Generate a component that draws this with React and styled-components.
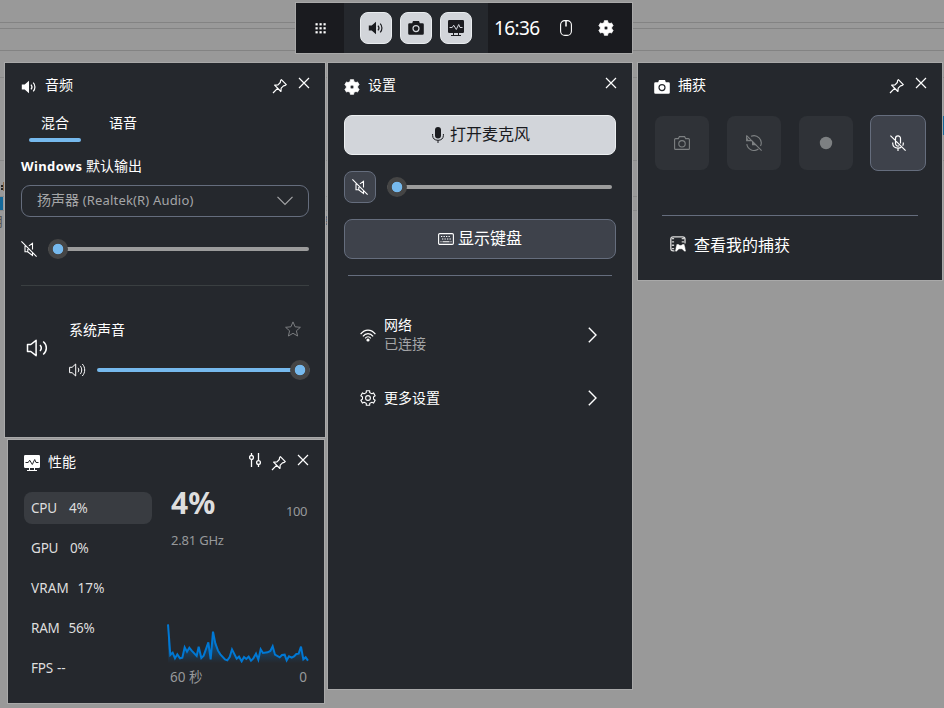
import React from 'react';
import styled, {createGlobalStyle} from 'styled-components';

const GlobalStyle = createGlobalStyle`
  * {
    box-sizing: border-box;
  }

  body {
    margin: 0;
    overflow: hidden;
    font-family: "Noto Sans", "Noto Sans CJK SC", sans-serif;
    font-size: 14px;
    color: #fff;
  }

  button {
    font: inherit;
    color: inherit;
    padding: 0;
    margin: 0;
    border: 0;
    background: none;
  }

  svg {
    display: block;
    flex: none;
  }
`;

const Desktop = styled.main`
  position: relative;
  width: 944px;
  height: 708px;
  overflow: hidden;
  background:
    linear-gradient(#838383, #838383) 0 22px / 100% 1px no-repeat,
    linear-gradient(#838383, #838383) 0 28px / 100% 1px no-repeat,
    linear-gradient(#838383, #838383) 0 50px / 100% 1px no-repeat,
    linear-gradient(#8a8a8a, #8a8a8a) 0 77px / 100% 1px no-repeat,
    linear-gradient(#8a8a8a, #8a8a8a) 0 160px / 100% 1px no-repeat,
    linear-gradient(#8a8a8a, #8a8a8a) 0 196px / 640px 1px no-repeat,
    linear-gradient(#8a8a8a, #8a8a8a) 0 210px / 640px 1px no-repeat,
    linear-gradient(#222, #222) 1px 185px / 2px 2px no-repeat,
    linear-gradient(#222, #222) 1px 188px / 2px 2px no-repeat,
    linear-gradient(#8a6a4a, #8a6a4a) 3px 182px / 1px 9px no-repeat,
    linear-gradient(#14699a, #14699a) 0 197px / 3px 13px no-repeat,
    linear-gradient(#14699a, #14699a) 942px 116px / 2px 19px no-repeat,
    #999;
`;

const DesktopText = styled.span`
  position: absolute;
  left: ${p => p.$x}px;
  top: ${p => p.$y}px;
  font-size: 13px;
  line-height: 18px;
  color: ${p => p.$color || '#555'};
`;

// a floating overlay window
const Panel = styled.section`
  position: absolute;
  left: ${p => p.$x}px;
  top: ${p => p.$y}px;
  width: ${p => p.$w}px;
  height: ${p => p.$h}px;
  background: #25282d;
  box-shadow: 0 0 0 1px #a9a9a9;
`;

const Header = styled.header`
  display: flex;
  height: 44px;
  padding: 15px 15px 0 16px;

  > svg {
    margin-top: 1px;
  }
`;

const Title = styled.h2`
  flex: 1;
  margin: 0 0 0 8px;
  font-size: 14px;
  font-weight: 400;
  line-height: 14px;
`;

const HeaderButton = styled.button`
  height: 16px;
  margin: ${p => p.$top || 0}px 0 0 ${p => p.$gap || 0}px;
`;

const Latin = styled.span`
  font-size: 13px;
  letter-spacing: ${p => p.$spacing || 0}px;
  font-weight: ${p => (p.$bold ? 700 : 400)};
`;

const Divider = styled.hr`
  height: 1px;
  margin: ${p => p.$margin};
  border: 0;
  background: ${p => p.$color || '#656d7d'};
`;

/* toolbar */

const Toolbar = styled(Panel)`
  display: flex;
  align-items: stretch;
  background: #1a1b1f;
`;

const GridButton = styled.button`
  display: flex;
  align-items: center;
  justify-content: center;
  flex: none;
  width: 48px;
`;

const WidgetButtons = styled.div`
  display: flex;
  align-items: center;
  justify-content: center;
  flex: none;
  gap: 8px;
  width: 144px;
  background: #25282d;
`;

const WidgetButton = styled.button`
  display: flex;
  align-items: center;
  justify-content: center;
  width: 32px;
  height: 32px;
  border: 1px solid #e9ecef;
  border-radius: 8px;
  background: #d2d5da;
  color: #1a1b1f;
`;

const Status = styled.div`
  display: flex;
  align-items: center;
  flex: 1;
  padding: 0 18px 0 6px;
`;

const Clock = styled.time`
  width: 66px;
  font-size: 19px;
  line-height: 24px;
  letter-spacing: -0.6px;
`;

const StatusButton = styled.button`
  margin-left: ${p => p.$gap || 0}px;
`;

/* audio */

const Tabs = styled.nav`
  display: flex;
  gap: 16px;
  padding: 9px 24px 0;
`;

const Tab = styled.button`
  width: 52px;
  height: 26px;
  line-height: 14px;

  &::after {
    content: "";
    display: block;
    height: 4px;
    margin-top: 8px;
    border-radius: 2px;
    background: ${p => (p.$active ? '#76b9ed' : 'transparent')};
  }
`;

const OutputLabel = styled.div`
  height: 16px;
  margin: 16px 16px 0;
  line-height: 16px;
`;

const Select = styled.button`
  display: flex;
  align-items: center;
  justify-content: space-between;
  width: 288px;
  height: 32px;
  margin: 11px 16px 0;
  padding: 0 15px;
  border: 1px solid #656d7d;
  border-radius: 9px;
  color: #a4a5a7;
  line-height: 16px;

  > span {
    padding-bottom: 2px;
  }
`;

const VolumeRow = styled.div`
  display: flex;
  align-items: center;
  height: 20px;
  margin: ${p => p.$margin};
  gap: 11px;
`;

const Track = styled.div`
  display: flex;
  align-items: center;
  flex: 1;
  height: 4px;
  border-radius: 2px;
  background: ${p => (p.$full ? '#76b9ed' : '#9c9c9c')};
  justify-content: ${p => (p.$full ? 'flex-end' : 'flex-start')};
`;

const Thumb = styled.span`
  width: 20px;
  height: 20px;
  flex: none;
  border-radius: 50%;
  background: radial-gradient(circle, #76b9ed 4.900px, #454545 5.600px);
`;

const AppRow = styled.div`
  display: flex;
  padding: 34px 15px 0 21px;
`;

const AppIcon = styled.div`
  width: 43px;
  padding-top: 19px;
`;

const AppBody = styled.div`
  flex: 1;
`;

const AppName = styled.div`
  display: flex;
  justify-content: space-between;
  align-items: center;
  height: 20px;
  padding-right: 9px;
  line-height: 18px;

  svg {
    margin-bottom: 2px;
  }
`;

/* settings */

const WideButton = styled.button`
  display: flex;
  align-items: center;
  justify-content: center;
  gap: 4px;
  width: 272px;
  height: 40px;
  font-size: 16px;
  line-height: 20px;
  border: 1px solid ${p => (p.$light ? '#eceff1' : '#656d7d')};
  border-radius: 8px;
  background: ${p => (p.$light ? '#d2d5da' : '#3e424b')};
  color: ${p => (p.$light ? '#1a1b1f' : '#fff')};

  span {
    padding-bottom: 2px;
  }
`;

const SettingsBody = styled.div`
  padding: 8px 16px 0;
`;

const MicRow = styled.div`
  display: flex;
  align-items: center;
  gap: 11px;
  margin: 16px 4px 16px 0;
`;

const MuteButton = styled.button`
  display: flex;
  align-items: center;
  justify-content: center;
  width: 32px;
  height: 32px;
  border: 1px solid #656d7d;
  border-radius: 8px;
  background: #3e424b;
`;

const LinkRow = styled.button`
  display: flex;
  align-items: center;
  width: 100%;
  height: ${p => p.$h}px;
  padding: 0 19px 0 16px;
  gap: 8px;
  text-align: left;
`;

const LinkText = styled.div`
  flex: 1;
  padding-bottom: 2px;
  line-height: 19px;

  small {
    display: block;
    font-size: 14px;
    color: #a4a5a7;
  }
`;

/* capture */

const CaptureButtons = styled.div`
  display: flex;
  align-items: center;
  gap: 18px;
  height: 56px;
  margin: 8px 0 0 17px;
`;

const CaptureButton = styled.button`
  display: flex;
  align-items: center;
  justify-content: center;
  flex: none;
  width: ${p => (p.$active ? 56 : 54)}px;
  height: ${p => (p.$active ? 56 : 54)}px;
  margin-left: ${p => (p.$active ? -1 : 0)}px;
  border: ${p => (p.$active ? '1px solid #656d7d' : '0')};
  border-radius: 8px;
  background: ${p => (p.$active ? '#3e424b' : '#2f3237')};
  color: ${p => (p.$active ? '#fff' : '#7d8082')};
`;

const CaptureLink = styled.button`
  display: flex;
  align-items: center;
  gap: 8px;
  margin: 17px 0 0 32px;
  height: 24px;
  font-size: 16px;
  line-height: 24px;

  svg {
    margin-bottom: 3px;
  }
`;

/* performance */

const PerfBody = styled.div`
  display: flex;
  padding: 8px 16px 0 16px;
`;

const Metrics = styled.div`
  display: flex;
  flex-direction: column;
  flex: none;
  gap: 8px;
  width: 128px;
  margin-right: 15px;
`;

const Metric = styled.div`
  display: flex;
  align-items: center;
  height: 32px;
  padding-left: 7px;
  border-radius: 8px;
  font-size: 13.5px;
  letter-spacing: ${p => p.$spacing || -0.2}px;
  color: #dedede;
  background: ${p => (p.$active ? '#393c41' : 'transparent')};
`;

const MetricName = styled.span`
  width: ${p => p.$w}px;
`;

const Detail = styled.div`
  flex: 1;
  color: #97999b;
  font-size: 13px;
`;

const DetailTop = styled.div`
  display: flex;
  justify-content: space-between;
  height: 34px;
  padding: 0 2px 0 4px;

  strong {
    font-size: 30px;
    line-height: 22px;
    color: #dedede;
  }

  span {
    margin-top: 9px;
    line-height: 20px;
    letter-spacing: -0.4px;
  }
`;

const Speed = styled.div`
  height: 20px;
  margin: 4px 0 73px 4px;
  line-height: 20px;
  letter-spacing: -0.2px;
`;

const Axis = styled.div`
  display: flex;
  justify-content: space-between;
  padding: 0 2px 0 3px;
  margin-top: 4px;
  font-size: 13.5px;
  line-height: 20px;
`;

/* icons */

const Icon = ({w = 16, h = 16, sw = 1, box, children}) => (
  <svg width={w} height={h} viewBox={box || `0 0 ${w} ${h}`} fill="none" stroke="currentColor" strokeWidth={sw}>
    {children}
  </svg>
);

const CloseIcon = () => (
  <Icon w={12} h={12} sw={1.2}><path d="M1 1l10 10M11 1L1 11" /></Icon>
);

const PinIcon = () => (
  <Icon sw={1.2}>
    <path d="M1 15l4.8-4.8M9.4 1.7l4.9 4.9-1 .8-1.8.4-2.3 2.3-.3 3.4L2.6 7.2 6 6.8l2.3-2.3.3-1.8z" strokeLinejoin="round" />
  </Icon>
);

const SpeakerFilled = () => (
  <Icon>
    <path d="M.8 5.4h2.9L8 1.7v12.6l-4.3-3.7H.8z" fill="currentColor" stroke="none" />
    <path d="M10 5.6c1.1 1.3 1.1 3.5 0 4.8M12.2 3.6c2.3 2.4 2.3 6.4 0 8.8" strokeWidth="1.2" />
  </Icon>
);

const SpeakerMuted = () => (
  <Icon sw={1.1}>
    <path d="M.4.4l15.2 15.2M5.3 5.2H4v5.6h2.6l4.9 3.7v-3M7.9 4.9l3.6-2.6v6.1M6.8 6v4.8" />
  </Icon>
);

const CameraFilled = () => (
  <Icon>
    <path d="M1.5 3.2h2.7L5 1h6l.8 2.2h2.7q1.3 0 1.3 1.3v9q0 1.3-1.3 1.3h-13Q.2 14.8.2 13.5v-9q0-1.3 1.3-1.3z" fill="currentColor" stroke="none" />
    <circle cx="8" cy="8.6" r="3" stroke="var(--hole)" strokeWidth="1.2" />
  </Icon>
);

const CameraOutline = () => (
  <Icon sw={1.1}>
    <path d="M1.6 3.6h2.8l1-2h5.2l1 2h2.8q1 0 1 1v8.8q0 1-1 1H1.6q-1 0-1-1V4.6q0-1 1-1z" />
    <circle cx="8" cy="8.8" r="3.2" />
  </Icon>
);

const MonitorFilled = () => (
  <Icon>
    <path d="M1.2 0h13.6Q16 0 16 1.2v10.6q0 1.2-1.2 1.2H1.2Q0 13 0 11.8V1.2Q0 0 1.2 0z" fill="currentColor" stroke="none" />
    <path d="M5.5 13v2.5M10.5 13v2.500M3 15.5h10" />
    <path d="M1.5 7.5h2.7l1.5-2.300 2.600 4.300 2.400-5 1.300 3h2.500" stroke="var(--hole)" />
  </Icon>
);

const Hole = styled.span`
  --hole: ${p => p.$color};
  display: block;
  height: 16px;
  margin-top: ${p => p.$top || 0}px;
`;

// six-toothed gear, first tooth pointing up
const gearPath = (outer, inner) => {
  const points = [];
  for (let i = 0; i < 6; i++) {
    [[-28, inner], [-17, inner + 0.3], [-13, outer], [13, outer], [17, inner + 0.3], [28, inner]].forEach(([deg, r]) => {
      const a = ((i * 60 + deg - 90) * Math.PI) / 180;
      points.push(`${(8 + r * Math.cos(a)).toFixed(2)} ${(8 + r * Math.sin(a)).toFixed(2)}`);
    });
  }
  return `M${points.join('L')}Z`;
};

const GearFilled = () => (
  <Icon>
    <path
      d={`${gearPath(7.5, 5.7)}M10 8a2 2 0 1 0-4 0a2 2 0 1 0 4 0z`}
      fill="currentColor"
      fillRule="evenodd"
      strokeLinejoin="round"
      strokeWidth=".8"
    />
  </Icon>
);

const GearOutline = () => (
  <Icon sw={1.1}>
    <path d={gearPath(7.5, 5.5)} strokeLinejoin="round" />
    <circle cx="8" cy="8" r="2.4" />
  </Icon>
);

const GridIcon = () => (
  <svg width="11" height="11" viewBox="0 0 11 11" fill="#fff">
    {[0, 4, 8].map(y => [0, 4, 8].map(x => <rect key={`${x}-${y}`} x={x + 0.5} y={y + 0.2} width="2.2" height="2.2" />))}
  </svg>
);

const MouseIcon = () => (
  <Icon w={12} h={16} sw={1.1}>
    <rect x=".6" y=".6" width="10.8" height="14.8" rx="4.2" />
    <path d="M6 1v5.500" strokeWidth="1.5" />
  </Icon>
);

const ChevronDown = () => (
  <Icon w={16} h={10} sw={1.2}><path d="M.5.8L8 8.5 15.5.8" /></Icon>
);

const ChevronRight = () => (
  <Icon w={9} h={16} sw={1.4}><path d="M.8.7L8 8 .8 15.3" /></Icon>
);

const StarIcon = () => (
  <Icon>
    <path d="M8 .9l2.1 4.9 5.3.5-4 3.5 1.2 5.2L8 12.3 3.4 15l1.200-5.200-4-3.500 5.300-.5z" stroke="#7b7d80" />
  </Icon>
);

const MicFilled = () => (
  <Icon box="-2 0 16 16">
    <rect x="3" y="0" width="6" height="11.5" rx="3" fill="currentColor" stroke="none" />
    <path d="M.6 7v1.500q.3 4.700 5.400 4.800 5.100-.1 5.400-4.800V7M6 13.300V16" />
  </Icon>
);

const MicMuted = () => (
  <Icon sw={1.2}>
    <path d="M.4.6l15.200 15M5.500 6V3.500a2.500 2.700 0 0 1 5 0v5M5.500 6v2.500a2.500 2.500 0 0 0 3.700 2.200M2.700 7.500v1q.3 4.500 5.300 4.600 2 0 3.200-.9M13.300 7.500v1q0 1.200-.6 2.200M8 13.100V16" />
  </Icon>
);

const ReplayMuted = () => (
  <Icon sw={1.1}>
    <path d="M.4.4l15.200 15.200M.6.8v4.800h4.800M5 1.300a7.300 7.300 0 0 1 9.500 9.800M.8 9.200a7.300 7.300 0 0 0 11.600 4.800M1 5.300l1-1.700" />
    <path d="M6 5.500v4.800h4.600z" fill="currentColor" stroke="none" />
  </Icon>
);

const KeyboardIcon = () => (
  <Icon h={12} sw={1.1}>
    <rect x=".6" y=".6" width="14.8" height="10.8" rx="1.2" />
    <path d="M3 3.500h10M4 6h9.500" strokeDasharray="1.3 1.2" />
    <path d="M4.500 8.700h7M2.500 8.700h1M12.500 8.700h1" />
  </Icon>
);

const WifiIcon = () => (
  <Icon h={13} sw={1.2}>
    <path d="M.6 5.200C4.700-.3 11.300-.3 15.400 5.200M2.900 7.300c2.700-3.700 7.500-3.700 10.200 0M5.200 9.300c1.500-2.100 4.100-2.100 5.600 0" />
    <circle cx="8" cy="11" r="1.6" fill="currentColor" stroke="none" />
  </Icon>
);

const GalleryIcon = () => (
  <Icon>
    <path d="M4.500 14.800H3.200Q.8 14.800.8 12.300V3.200Q.8.8 3.200.8h9.400Q15 .8 15 3.200V7.500" strokeWidth="1.300" stroke="#ddd" />
    <path d="M2.900 2v12M12.900 2v5.500" strokeWidth="2.400" strokeDasharray="1.300 2" stroke="#cfcfcf" />
    <path d="M6.500 8h2.300l.7 1h2l.7-1h2.300L16 14.800q-.4 1.300-1.700.8L12 13.300H9l-2.300 2.300q-1.300.5-1.700-.8z" fill="#fff" stroke="#25282d" strokeWidth=".5" />
  </Icon>
);

const TuneIcon = () => (
  <Icon w={12} h={14} sw={1.3}>
    <path d="M2.500 0v2.300M2.500 6.500V14M9.500 0v7.500M9.500 11.500V14" />
    <circle cx="2.500" cy="4.400" r="1.900" />
    <circle cx="9.500" cy="9.500" r="1.900" />
  </Icon>
);

const SpeakerBig = () => (
  <Icon w={22} h={18} sw={1.5}>
    <path d="M1.500 5.500h3.300l5.300-4.200v15.400l-5.300-4.200H1.500z" strokeLinejoin="round" />
    <path d="M14 6c1.500 1.700 1.500 4.300 0 6M17.200 2.500c4.200 3.700 4.200 9.300 0 13" />
  </Icon>
);

const SpeakerSmall = () => (
  <Icon w={17} h={14}>
    <path d="M.6 4.300h2.500L6.700 1v12L3.100 9.700H.6z" />
    <path d="M9 4.800c1 1.300 1 3.100 0 4.400M11.200 2.900c2 2.300 2 5.900 0 8.200M13.300 1c3.200 3.400 3.200 8.600 0 12" />
  </Icon>
);

// cpu history over the last minute, in thirds of a pixel
const history = [
  [24, 28], [31, 120], [38, 113], [45, 130], [52, 118], [60, 130], [67, 128], [74, 97], [81, 110], [88, 98],
  [95, 107], [110, 123], [116, 95], [124, 129], [131, 122], [145, 82], [152, 133], [159, 50], [166, 85],
  [174, 107], [181, 118], [195, 133], [202, 136], [209, 126], [216, 103], [230, 131], [237, 125], [245, 139],
  [252, 126], [259, 132], [266, 125], [273, 137], [280, 130], [288, 116], [295, 134], [302, 103], [309, 114],
  [323, 112], [331, 108], [338, 94], [345, 119], [359, 127], [366, 120], [374, 119], [380, 136], [387, 124],
  [395, 128], [402, 124], [409, 117], [416, 116], [423, 95], [430, 133], [437, 127], [444, 137],
];

const Graph = () => {
  const line = history.map(p => p.join(' ')).join('L');
  return (
    <svg width="142" height="40" viewBox="21 24 426 120">
      <defs>
        <linearGradient id="cpu" x1="0" y1="0" x2="0" y2="1">
          <stop offset="0" stopColor="#0078d4" stopOpacity=".9" />
          <stop offset="1" stopColor="#0078d4" stopOpacity="0" />
        </linearGradient>
      </defs>
      <path d={`M${line}L444 144L24 144Z`} fill="url(#cpu)" />
      <path d={`M${line}`} fill="none" stroke="#0078d4" strokeWidth="6" />
    </svg>
  );
};

const metrics = [
  {name: 'CPU', value: '4%', w: 38, active: true},
  {name: 'GPU', value: '0%', w: 39},
  {name: 'VRAM', value: '17%', w: 46.5, spacing: 0.1},
  {name: 'RAM', value: '56%', w: 37.5},
  {name: 'FPS', value: '--', w: 26},
];

const TopBar = () => (
  <Toolbar $x={296} $y={3} $w={336} $h={50}>
    <GridButton><GridIcon /></GridButton>
    <WidgetButtons>
      <WidgetButton><SpeakerFilled /></WidgetButton>
      <WidgetButton><Hole $color="#d2d5da"><CameraFilled /></Hole></WidgetButton>
      <WidgetButton><Hole $color="#d2d5da"><MonitorFilled /></Hole></WidgetButton>
    </WidgetButtons>
    <Status>
      <Clock>16:36</Clock>
      <StatusButton><MouseIcon /></StatusButton>
      <StatusButton $gap={26}><GearFilled /></StatusButton>
    </Status>
  </Toolbar>
);

const AudioPanel = () => (
  <Panel $x={5} $y={63} $w={320} $h={374}>
    <Header>
      <SpeakerFilled />
      <Title>音频</Title>
      <HeaderButton><PinIcon /></HeaderButton>
      <HeaderButton $gap={10} $top={-3}><CloseIcon /></HeaderButton>
    </Header>
    <Tabs>
      <Tab $active>混合</Tab>
      <Tab>语音</Tab>
    </Tabs>
    <OutputLabel><Latin $bold $spacing={0.4}>Windows</Latin> 默认输出</OutputLabel>
    <Select>
      <span>扬声器 <Latin $spacing={0.18}>(Realtek(R) Audio)</Latin></span>
      <ChevronDown />
    </Select>
    <VolumeRow $margin="22px 16px 0">
      <SpeakerMuted />
      <Track><Thumb /></Track>
    </VolumeRow>
    <Divider $margin="26px 16px 0" $color="#3a3f41" />
    <AppRow>
      <AppIcon><SpeakerBig /></AppIcon>
      <AppBody>
        <AppName>系统声音<StarIcon /></AppName>
        <VolumeRow $margin="20px 0 0">
          <SpeakerSmall />
          <Track $full><Thumb /></Track>
        </VolumeRow>
      </AppBody>
    </AppRow>
  </Panel>
);

const SettingsPanel = () => (
  <Panel $x={328} $y={63} $w={304} $h={626}>
    <Header>
      <GearFilled />
      <Title>设置</Title>
      <HeaderButton $top={-3}><CloseIcon /></HeaderButton>
    </Header>
    <SettingsBody>
      <WideButton $light><MicFilled /><span>打开麦克风</span></WideButton>
      <MicRow>
        <MuteButton><SpeakerMuted /></MuteButton>
        <Track><Thumb /></Track>
      </MicRow>
      <WideButton><KeyboardIcon /><span>显示键盘</span></WideButton>
      <Divider $margin="16px 4px 27px" />
      <LinkRow $h={64}>
        <WifiIcon />
        <LinkText>网络<small>已连接</small></LinkText>
        <ChevronRight />
      </LinkRow>
      <LinkRow $h={62}>
        <GearOutline />
        <LinkText>更多设置</LinkText>
        <ChevronRight />
      </LinkRow>
    </SettingsBody>
  </Panel>
);

const CapturePanel = () => (
  <Panel $x={638} $y={63} $w={304} $h={217}>
    <Header>
      <Hole $color="#25282d" $top={1}><CameraFilled /></Hole>
      <Title>捕获</Title>
      <HeaderButton><PinIcon /></HeaderButton>
      <HeaderButton $gap={10} $top={-3}><CloseIcon /></HeaderButton>
    </Header>
    <CaptureButtons>
      <CaptureButton><CameraOutline /></CaptureButton>
      <CaptureButton><ReplayMuted /></CaptureButton>
      <CaptureButton><Icon><circle cx="8" cy="8" r="6.2" fill="currentColor" stroke="none" /></Icon></CaptureButton>
      <CaptureButton $active><MicMuted /></CaptureButton>
    </CaptureButtons>
    <Divider $margin="44px 24px 0" />
    <CaptureLink><GalleryIcon />查看我的捕获</CaptureLink>
  </Panel>
);

const PerformancePanel = () => (
  <Panel $x={8} $y={440} $w={316} $h={263}>
    <Header>
      <Hole $color="#25282d"><MonitorFilled /></Hole>
      <Title>性能</Title>
      <HeaderButton $top={-3}><TuneIcon /></HeaderButton>
      <HeaderButton $gap={10}><PinIcon /></HeaderButton>
      <HeaderButton $gap={10} $top={-3}><CloseIcon /></HeaderButton>
    </Header>
    <PerfBody>
      <Metrics>
        {metrics.map(m => (
          <Metric key={m.name} $active={m.active} $spacing={m.spacing}>
            <MetricName $w={m.w}>{m.name}</MetricName>
            {m.value}
          </Metric>
        ))}
      </Metrics>
      <Detail>
        <DetailTop><strong>4%</strong><span>100</span></DetailTop>
        <Speed>2.81 GHz</Speed>
        <Graph />
        <Axis><span>60 秒</span><span>0</span></Axis>
      </Detail>
    </PerfBody>
  </Panel>
);

const App = () => (
  <Desktop>
    <GlobalStyle />
    <DesktopText $x={-9} $y={212}>月</DesktopText>
    <DesktopText $x={321} $y={211} $color="#456">8</DesktopText>
    <TopBar />
    <AudioPanel />
    <SettingsPanel />
    <CapturePanel />
    <PerformancePanel />
  </Desktop>
);

export default App;
